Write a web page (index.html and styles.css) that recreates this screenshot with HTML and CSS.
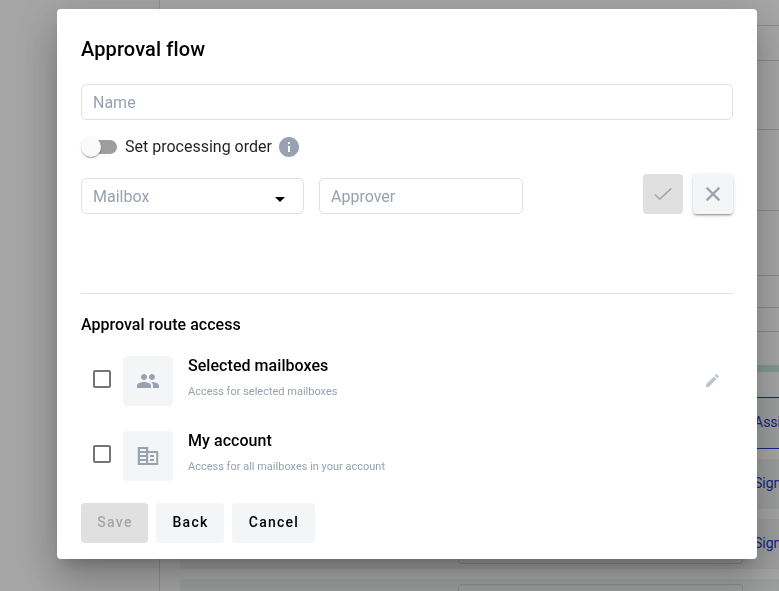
FILE: index.html
```
<!DOCTYPE html>
<html lang="en">
<head>
<meta charset="utf-8">
<title>Approval flow</title>
<link rel="stylesheet" href="styles.css">
</head>
<body>
<div class="page">
  <aside class="sidebar"></aside>
  <main class="content">
    <div class="line h26"></div>
    <div class="line h35"></div>
    <div class="line h69"></div>
    <div class="line h81"></div>
    <div class="line h65"></div>
    <div class="line h32"></div>
    <div class="line h24"></div>
    <div class="progress"></div>
    <div class="rows">
      <div class="row active"><span class="field"></span><span class="action">Assign</span></div>
      <div class="row"><span class="field"></span><span class="action">Sign</span></div>
      <div class="row"><span class="field"></span><span class="action">Sign</span></div>
      <div class="row"><span class="field"></span></div>
    </div>
  </main>
</div>
<div class="overlay">
  <section class="dialog" role="dialog">
    <h1 class="title">Approval flow</h1>
    <div class="input">Name</div>
    <div class="switch-row">
      <span class="switch"><span class="knob"></span></span>
      <span class="switch-label">Set processing order</span>
      <svg class="info" viewBox="0 0 24 24"><path d="M12 2C6.48 2 2 6.48 2 12s4.480 10 10 10 10-4.480 10-10S17.520 2 12 2zm1 15h-2v-6h2v6zm0-8h-2V7h2v2z"/></svg>
    </div>
    <div class="approver-row">
      <div class="input mailbox">Mailbox<svg class="caret" viewBox="0 0 10 5"><path d="M0 0h10L5 5z"/></svg></div>
      <div class="input approver">Approver</div>
      <div class="square confirm"><svg viewBox="0 0 24 24"><path d="M4 12.500l4.700 4.700L20.300 6.300"/></svg></div>
      <div class="square close"><svg viewBox="0 0 24 24"><path d="M19 6.410L17.590 5 12 10.590 6.410 5 5 6.410 10.590 12 5 17.590 6.410 19 12 13.410 17.590 19 19 17.590 13.410 12z"/></svg></div>
    </div>
    <h2 class="subtitle">Approval route access</h2>
    <div class="option">
      <span class="checkbox"></span>
      <span class="tile"><svg viewBox="0 0 24 24"><path d="M16 11c1.660 0 2.990-1.340 2.990-3S17.660 5 16 5c-1.660 0-3 1.340-3 3s1.340 3 3 3zm-8 0c1.660 0 2.990-1.340 2.990-3S9.660 5 8 5C6.340 5 5 6.340 5 8s1.340 3 3 3zm0 2c-2.330 0-7 1.170-7 3.500V19h14v-2.500c0-2.330-4.670-3.500-7-3.500zm8 0c-.29 0-.62.020-.97.050 1.160.840 1.970 1.970 1.970 3.450V19h6v-2.500c0-2.330-4.670-3.500-7-3.500z"/></svg></span>
      <div class="option-text"><b>Selected mailboxes</b><small>Access for selected mailboxes</small></div>
      <svg class="edit" viewBox="0 0 24 24"><path d="M3 17.250V21h3.750L17.810 9.940l-3.750-3.750L3 17.250zM20.710 7.040c.39-.39.39-1.020 0-1.410l-2.340-2.340c-.39-.39-1.020-.39-1.410 0l-1.830 1.830 3.750 3.750 1.830-1.830z"/></svg>
    </div>
    <div class="option">
      <span class="checkbox"></span>
      <span class="tile"><svg viewBox="0 0 24 24"><path fill-rule="evenodd" d="M1.800 3h10.400v4h10v14H1.800zM4 5h6v2H4zM4 9h6v2H4zM4 13h6v2H4zM4 17h6v2H4zM12.200 9h8v10h-8zM14 11h4v2h-4zM14 15h4v2h-4z"/></svg></span>
      <div class="option-text"><b>My account</b><small>Access for all mailboxes in your account</small></div>
    </div>
    <div class="buttons">
      <div class="button disabled">Save</div>
      <div class="button back">Back</div>
      <div class="button cancel">Cancel</div>
    </div>
  </section>
</div>
</body>
</html>
```
FILE: styles.css
```
* { box-sizing: border-box; }
body { margin: 0; height: 591px; overflow: hidden; font-family: Roboto, sans-serif; color: #000; }
.page { display: flex; height: 591px; overflow: hidden; background: #fff; }
.sidebar { width: 160px; flex: none; background: #fdfdfd; border-right: 1px solid #dcdddd; }
.content { flex: 1; min-width: 0; padding-left: 20px; }
.line { border-bottom: 1px solid #d8d8d8; }
.h26 { height: 26px; }
.h35 { height: 35px; }
.h69 { height: 69px; }
.h81 { height: 81px; }
.h65 { height: 65px; }
.h32 { height: 32px; }
.h24 { height: 24px; }
.progress { height: 7px; margin-top: 33px; background: #c8ebe5; }
.rows { display: flex; flex-direction: column; gap: 10px; margin-top: 25px; }
.row { display: flex; align-items: center; gap: 11px; height: 50px; flex: none; padding-left: 278px; background: #f2f4f4; border-radius: 4px 0 0 4px; }
.row.active { height: 52px; border: solid #1b3fc8; border-width: 1px 0; }
.field { width: 285px; height: 40px; flex: none; border: 1px solid #d2d5d7; border-radius: 4px; }
.action { margin-bottom: 2px; font-size: 14px; line-height: 20px; color: #2435c8; }
.overlay { position: fixed; inset: 0; padding: 9px 22px 32px 57px; background: rgba(0, 0, 0, .35); }
.dialog { height: 550px; padding: 24px; background: #fff; border-radius: 4px; box-shadow: 0 11px 15px -7px rgba(0,0,0,.2), 0 24px 38px 3px rgba(0,0,0,.14), 0 9px 46px 8px rgba(0,0,0,.12); }
.title { margin: 0 0 19px; font-size: 20px; line-height: 32px; font-weight: 500; letter-spacing: .12px; }
.input { display: flex; align-items: center; height: 36px; padding: 0 11px; border: 1px solid #dfe0e1; border-radius: 5px; font-size: 16px; color: #98a2ae; }
.switch-row { display: flex; align-items: center; height: 24px; margin-top: 15px; }
.switch { display: flex; align-items: center; width: 36px; height: 14px; border-radius: 7px; background: linear-gradient(to right, transparent 8px, #9e9e9e 8px); }
.knob { width: 20px; height: 20px; border-radius: 50%; background: #fafafa; box-shadow: 0 2px 1px -1px rgba(0,0,0,.2), 0 1px 1px rgba(0,0,0,.14), 0 1px 3px rgba(0,0,0,.12); }
.switch-label { margin: 0 0 2px 8px; font-size: 16px; color: rgba(0,0,0,.87); }
.info { width: 24px; height: 24px; margin-left: 5px; fill: #98a2ae; }
.approver-row { display: flex; align-items: flex-start; height: 120px; margin-top: 15px; border-bottom: 1px solid #dfe0e1; }
.approver-row .input { margin-top: 4px; }
.mailbox { justify-content: space-between; width: 223px; padding-right: 18px; }
.caret { width: 10px; height: 5px; margin-top: 6px; fill: #000; }
.approver { width: 204px; margin-left: 15px; }
.square { display: flex; align-items: center; justify-content: center; width: 40px; height: 40px; border-radius: 4px; }
.square svg { width: 24px; height: 24px; }
.confirm { margin-left: auto; background: #e0e0e0; }
.confirm svg { fill: none; stroke: #a6a6a6; stroke-width: 1.6; }
.close { margin-left: 10px; background: #f3f5f7; box-shadow: 0 3px 1px -2px rgba(0,0,0,.2), 0 2px 2px rgba(0,0,0,.14), 0 1px 5px rgba(0,0,0,.12); }
.close svg { fill: #98a2ae; stroke: #98a2ae; stroke-width: .3; }
.subtitle { margin: 19px 0 20px; font-size: 16px; line-height: 23px; font-weight: 500; letter-spacing: .03px; }
.option { display: flex; align-items: center; height: 50px; margin-bottom: 25px; padding: 0 12px; }
.checkbox { width: 18px; height: 18px; margin-top: -4px; border: 2px solid #757575; border-radius: 2px; }
.tile { display: flex; align-items: center; justify-content: center; width: 50px; height: 50px; margin-left: 12px; background: #f3f5f7; border-radius: 4px; }
.tile svg { width: 24px; height: 24px; fill: #98a2ae; }
.option-text { display: flex; flex-direction: column; height: 50px; margin-left: 15px; }
.option-text b { font-size: 16px; line-height: 20px; font-weight: 500; letter-spacing: .05px; }
.option-text small { margin-top: 9px; font-size: 11px; line-height: 14px; color: #98a2ae; }
.edit { width: 17px; height: 17px; margin: 0 0 2px auto; fill: #bcc5cb; }
.buttons { display: flex; gap: 8px; margin-top: -3px; }
.button { display: flex; justify-content: center; align-items: center; width: 67px; height: 40px; padding: 0 0 2px 1px; border-radius: 4px; background: #f3f5f7; font-size: 14px; font-weight: 500; letter-spacing: 1.25px; }
.back { width: 68px; }
.cancel { width: 83px; }
.disabled { background: #e0e0e0; color: #a6a6a6; }
```
